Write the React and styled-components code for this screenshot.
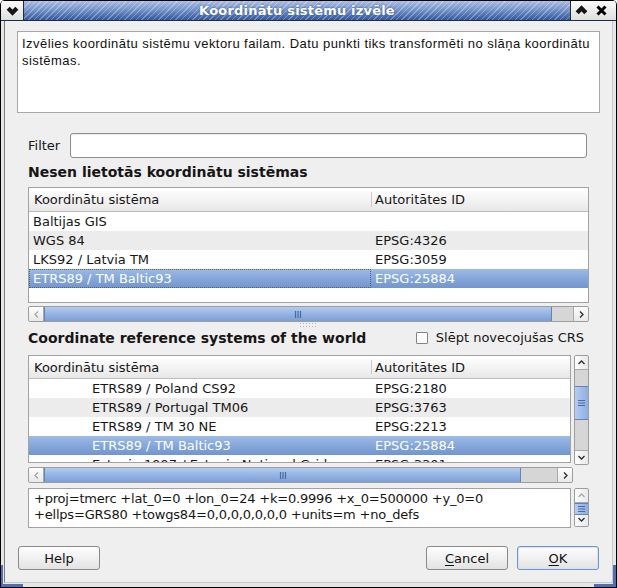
import React from "react";
import styled, { createGlobalStyle, css } from "styled-components";

const GlobalStyle = createGlobalStyle`
  html, body {
    margin: 0;
    padding: 0;
    background: #ffffff;
  }
  body {
    font-family: "DejaVu Sans", Verdana, sans-serif;
    font-size: 13px;
    color: #161616;
  }
`;

const recent = [
  { name: "Baltijas GIS", id: "" },
  { name: "WGS 84", id: "EPSG:4326" },
  { name: "LKS92 / Latvia TM", id: "EPSG:3059" },
  { name: "ETRS89 / TM Baltic93", id: "EPSG:25884", selected: true, focused: true },
];

const world = [
  { name: "ETRS89 / Poland CS92", id: "EPSG:2180" },
  { name: "ETRS89 / Portugal TM06", id: "EPSG:3763" },
  { name: "ETRS89 / TM 30 NE", id: "EPSG:2213" },
  { name: "ETRS89 / TM Baltic93", id: "EPSG:25884", selected: true },
  { name: "Estonia 1997 / Estonia National Grid", id: "EPSG:3301" },
];

/* ---------- window frame ---------- */

const Frame = styled.div`
  position: relative;
  width: 617px;
  height: 588px;
  box-sizing: border-box;
  border: 1px solid #000;
  border-top: none;
  border-radius: 5px 5px 0 0;
  background: #e6e6e6;
  padding: 0 3px 4px 3px;
  display: flex;
  flex-direction: column;
  overflow: hidden;
`;

const TitleBar = styled.div`
  display: flex;
  height: 19px;
  flex: none;
  margin: 0 -3px;
  border-top: 1px solid #000;
  border-bottom: 1px solid #1c2c4c;
`;

const TitleButton = styled.div`
  width: ${(p) => p.$w || 20}px;
  flex: none;
  display: flex;
  align-items: center;
  justify-content: center;
  background: linear-gradient(#fbfbfb, #dedede);
  border-left: ${(p) => (p.$edge === "right" ? "1px solid #2a2a2a" : "none")};
  border-right: ${(p) => (p.$edge === "left" ? "1px solid #2a2a2a" : "none")};
`;

const TitleStripes = styled.div`
  flex: 1;
  display: flex;
  align-items: center;
  justify-content: center;
  background:
    repeating-linear-gradient(135deg, rgba(255, 255, 255, 0.3) 0 1px, transparent 1px 4px),
    linear-gradient(#a7bde4 0%, #7693ca 45%, #4a6cae 80%, #355597 100%);
  color: #fff;
  font-weight: bold;
  font-size: 13px;
  letter-spacing: 0.2px;
  text-shadow: 0 0 2px #2b467c;
`;

const Body = styled.div`
  flex: 1;
  display: flex;
  flex-direction: column;
  background: #efefef;
  border-left: 1px solid #7a7a7a;
  border-right: 1px solid #c9c9c9;
  border-bottom: 1px solid #c9c9c9;
  padding: 10px 12px 0 12px;
`;

const Grip = styled.div`
  position: absolute;
  bottom: 0;
  ${(p) => (p.$side === "left" ? "left: 0;" : "right: 0;")}
  width: 22px;
  height: 22px;
  border-bottom: 3px solid #4f6fb0;
  ${(p) =>
    p.$side === "left"
      ? "border-left: 2px solid #4f6fb0;"
      : "border-right: 3px solid #4f6fb0;"}
  box-sizing: border-box;
  pointer-events: none;
`;

/* ---------- content ---------- */

const Description = styled.div`
  height: 82px;
  box-sizing: border-box;
  background: #fff;
  border: 1px solid #a7a7a7;
  padding: 3px 4px;
  font-family: "Liberation Sans", Arial, sans-serif;
  font-size: 13px;
  letter-spacing: 0.45px;
  line-height: 17px;
  color: #111;
`;

const Main = styled.div`
  display: flex;
  flex-direction: column;
  padding: 0 11px;
`;

const FilterRow = styled.label`
  display: flex;
  align-items: center;
  gap: 10px;
  margin-top: 20px;
  height: 25px;
`;

const TextInput = styled.div`
  flex: 1;
  height: 25px;
  box-sizing: border-box;
  margin-right: 2px;
  background: #fff;
  border: 1px solid #8d8d8d;
  border-radius: 3px;
  box-shadow: inset 0 1px 1px rgba(0, 0, 0, 0.08);
`;

const SectionTitle = styled.div`
  font-weight: bold;
  font-size: 14px;
  line-height: 16px;
  margin-top: ${(p) => p.$top || 0}px;
  white-space: nowrap;
`;

const SectionRow = styled.div`
  display: flex;
  align-items: center;
  justify-content: space-between;
  height: 17px;
`;

const CheckLabel = styled.label`
  display: flex;
  align-items: center;
  gap: 8px;
  margin-right: 5px;
  white-space: nowrap;
`;

const Checkbox = styled.span`
  width: 12px;
  height: 12px;
  box-sizing: border-box;
  background: #fff;
  border: 1px solid #858585;
  border-radius: 1px;
`;

const ListBox = styled.div`
  height: ${(p) => p.$h}px;
  box-sizing: border-box;
  background: #fff;
  border: 1px solid #a2a2a2;
  overflow: hidden;
  flex: ${(p) => (p.$grow ? 1 : "none")};
`;

const HeaderRow = styled.div`
  display: grid;
  grid-template-columns: 342px 1fr;
  height: ${(p) => p.$h || 24}px;
  background: linear-gradient(#ffffff, #f4f4f4 50%, #e7e7e7);
  border-bottom: 1px solid #bcbcbc;
`;

const HeaderCell = styled.div`
  display: flex;
  align-items: center;
  padding-left: ${(p) => (p.$divider ? 4 : 5)}px;
  position: relative;
  ${(p) =>
    p.$divider &&
    css`
      &::before {
        content: "";
        position: absolute;
        left: 0;
        top: 4px;
        bottom: 4px;
        width: 1px;
        background: #c9c9c9;
      }
    `}
`;

const Row = styled.div`
  display: grid;
  grid-template-columns: 342px 1fr;
  height: 19px;
  line-height: 19px;
  white-space: nowrap;
  background: ${(p) => (p.$alt ? "#ececec" : "#fff")};
  ${(p) =>
    p.$selected &&
    css`
      background: linear-gradient(#9dbbe6, #86a7da 50%, #7195cd);
      color: #fff;
    `}
`;

const Cell = styled.div`
  padding-left: ${(p) => p.$indent || 4}px;
  overflow: hidden;
  box-sizing: border-box;
  ${(p) =>
    p.$focus &&
    css`
      outline: 1px dotted #4a5f86;
      outline-offset: -1px;
    `}
`;

/* ---------- scroll bars ---------- */

const HBar = styled.div`
  display: flex;
  height: 16px;
  box-sizing: border-box;
  margin-top: ${(p) => p.$top || 0}px;
  margin-right: ${(p) => p.$right || 0}px;
  border: 1px solid #9d9d9d;
  border-radius: 2px;
  background: #d6d6d6;
  overflow: hidden;
`;

const VBar = styled.div`
  width: 15px;
  flex: none;
  display: flex;
  flex-direction: column;
  box-sizing: border-box;
  border: 1px solid #9d9d9d;
  border-radius: 2px;
  background: #d6d6d6;
  overflow: hidden;
`;

const Arrow = styled.div`
  flex: none;
  width: ${(p) => (p.$vertical ? "auto" : "14px")};
  height: ${(p) => (p.$vertical ? "13px" : "auto")};
  display: flex;
  align-items: center;
  justify-content: center;
  background: linear-gradient(${(p) => (p.$vertical ? "90deg," : "")} #fdfdfd, #e9e9e9);
  border-${(p) => p.$edge}: 1px solid #a9a9a9;
  color: ${(p) => (p.$dim ? "#a7a7a7" : "#2b2b2b")};
`;

const Track = styled.div`
  flex: 1;
  position: relative;
`;

const Thumb = styled.div`
  position: absolute;
  display: flex;
  align-items: center;
  justify-content: center;
  box-sizing: border-box;
  border: 1px solid #6184c0;
  border-radius: 1px;
  color: #4a6aa6;
  ${(p) =>
    p.$vertical
      ? css`
          left: -1px;
          right: -1px;
          top: ${p.$start}px;
          height: ${p.$size}px;
          background: linear-gradient(90deg, #b5cdf0, #8eaee0);
        `
      : css`
          top: -1px;
          bottom: -1px;
          left: ${p.$start}px;
          width: ${p.$size}px;
          background: linear-gradient(#b2cbef, #93b2e2 55%, #7d9fd6);
        `}
`;

const Splitter = styled.div`
  height: 7px;
  display: flex;
  justify-content: center;
  align-items: center;
`;

const ListRow = styled.div`
  display: flex;
  gap: 3px;
  margin-top: ${(p) => p.$top || 0}px;
  height: ${(p) => p.$h}px;
  align-items: flex-start;
`;

const ProjText = styled.div`
  flex: 1;
  height: 40px;
  box-sizing: border-box;
  background: #fff;
  border: 1px solid #a2a2a2;
  padding: 2px 5px;
  line-height: 16px;
  letter-spacing: -0.2px;
  white-space: nowrap;
  overflow: hidden;
`;

/* ---------- buttons ---------- */

const ButtonRow = styled.div`
  display: flex;
  align-items: center;
  margin-top: 18px;
  padding: 0 1px;
`;

const Button = styled.button`
  width: 82px;
  height: 24px;
  margin-left: ${(p) => p.$gap || 0}px;
  font: inherit;
  font-size: 13px;
  color: #111;
  background: linear-gradient(#fdfdfd, #f1f1f1 50%, #e2e2e2);
  border: 1px solid #8a8a8a;
  border-radius: 3px;
  padding: 0;
  ${(p) =>
    p.$default &&
    css`
      border-color: #7493c6;
      box-shadow: inset 0 0 0 1px #d7e3f5;
    `}
  u {
    text-decoration: underline;
    text-underline-offset: 2px;
  }
`;

const Spacer = styled.div`
  flex: 1;
`;

/* ---------- small drawings ---------- */

const Chevron = ({ dir = "down", size = 9, weight = 1.3 }) => {
  const paths = {
    down: "M1.5 3 L4.5 6 L7.5 3",
    up: "M1.5 6 L4.5 3 L7.5 6",
    left: "M6 1.5 L3 4.5 L6 7.5",
    right: "M3 1.5 L6 4.5 L3 7.5",
  };
  return (
    <svg width={size} height={size} viewBox="0 0 9 9">
      <path d={paths[dir]} fill="none" stroke="currentColor" strokeWidth={weight} />
    </svg>
  );
};

const GripLines = ({ vertical }) =>
  vertical ? (
    <svg width="7" height="8" viewBox="0 0 7 8">
      <path d="M0 1.5h7M0 4h7M0 6.5h7" stroke="currentColor" strokeWidth="1" />
    </svg>
  ) : (
    <svg width="8" height="7" viewBox="0 0 8 7">
      <path d="M1.5 0v7M4 0v7M6.5 0v7" stroke="currentColor" strokeWidth="1.2" />
    </svg>
  );

const SplitDots = () => (
  <svg width="18" height="5" viewBox="0 0 18 5">
    {[0, 1, 2, 3, 4, 5].map((i) =>
      [0, 3].map((j) => (
        <rect key={`${i}-${j}`} x={i * 3} y={j} width="1" height="1" fill="#b8b8b8" />
      ))
    )}
  </svg>
);

const HScroll = ({ start, size, top, right }) => (
  <HBar $top={top} $right={right}>
    <Arrow $edge="right" $dim>
      <Chevron dir="left" />
    </Arrow>
    <Track>
      <Thumb $start={start} $size={size}>
        <GripLines />
      </Thumb>
    </Track>
    <Arrow $edge="left">
      <Chevron dir="right" />
    </Arrow>
  </HBar>
);

const VScroll = ({ start, size, height, dimUp }) => (
  <VBar style={{ height }}>
    <Arrow $vertical $edge="bottom" $dim={dimUp}>
      <Chevron dir="up" />
    </Arrow>
    <Track>
      <Thumb $vertical $start={start} $size={size}>
        <GripLines vertical />
      </Thumb>
    </Track>
    <Arrow $vertical $edge="top">
      <Chevron dir="down" />
    </Arrow>
  </VBar>
);

const Table = ({ rows, indent, height, headerHeight, grow }) => (
  <ListBox $h={height} $grow={grow}>
    <HeaderRow $h={headerHeight}>
      <HeaderCell>Koordinātu sistēma</HeaderCell>
      <HeaderCell $divider>Autoritātes ID</HeaderCell>
    </HeaderRow>
    {rows.map((r, i) => (
      <Row key={r.name} $alt={i % 2 === 1} $selected={r.selected}>
        <Cell $indent={indent} $focus={r.focused}>
          {r.name}
        </Cell>
        <Cell>{r.id}</Cell>
      </Row>
    ))}
  </ListBox>
);

export default function App() {
  return (
    <>
      <GlobalStyle />
      <Frame>
        <TitleBar>
          <TitleButton $w={22} $edge="left">
            <Chevron dir="down" size={13} weight={3} />
          </TitleButton>
          <TitleStripes>Koordinātu sistēmu izvēle</TitleStripes>
          <TitleButton $w={20} $edge="right">
            <Chevron dir="up" size={13} weight={3} />
          </TitleButton>
          <TitleButton $w={25}>
            <svg width="11" height="11" viewBox="0 0 11 11" style={{ marginRight: 4 }}>
              <path d="M1.5 1.5L9.5 9.5M9.5 1.5L1.5 9.5" stroke="#000" strokeWidth="3" />
            </svg>
          </TitleButton>
        </TitleBar>

        <Body>
          <Description>
            Izvēlies koordinātu sistēmu vektoru failam. Datu punkti tiks transformēti no slāņa
            koordinātu sistēmas.
          </Description>

          <Main>
            <FilterRow>
              Filter
              <TextInput />
            </FilterRow>

            <SectionTitle $top={6}>Nesen lietotās koordinātu sistēmas</SectionTitle>

            <ListRow $top={7} $h={116}>
              <Table rows={recent} height={116} headerHeight={23} indent={4} grow />
            </ListRow>
            <HScroll top={3} start={0} size={508} />

            <Splitter>
              <SplitDots />
            </Splitter>

            <SectionRow>
              <SectionTitle>Coordinate reference systems of the world</SectionTitle>
              <CheckLabel>
                <Checkbox />
                Slēpt novecojušas CRS
              </CheckLabel>
            </SectionRow>

            <ListRow $top={9} $h={110}>
              <Table rows={world} height={108} headerHeight={22} indent={63} grow />
              <VScroll height={110} start={16} size={34} />
            </ListRow>
            <HScroll top={2} right={16} start={0} size={477} />

            <ListRow $top={5} $h={40}>
              <ProjText>
                +proj=tmerc +lat_0=0 +lon_0=24 +k=0.9996 +x_0=500000 +y_0=0
                <br />
                +ellps=GRS80 +towgs84=0,0,0,0,0,0,0 +units=m +no_defs
              </ProjText>
              <VScroll height={39} start={0} size={12} dimUp />
            </ListRow>
          </Main>

          <ButtonRow>
            <Button>Help</Button>
            <Spacer />
            <Button>
              <u>C</u>ancel
            </Button>
            <Button $default $gap={9}>
              <u>O</u>K
            </Button>
          </ButtonRow>
        </Body>

        <Grip $side="left" />
        <Grip $side="right" />
      </Frame>
    </>
  );
}
